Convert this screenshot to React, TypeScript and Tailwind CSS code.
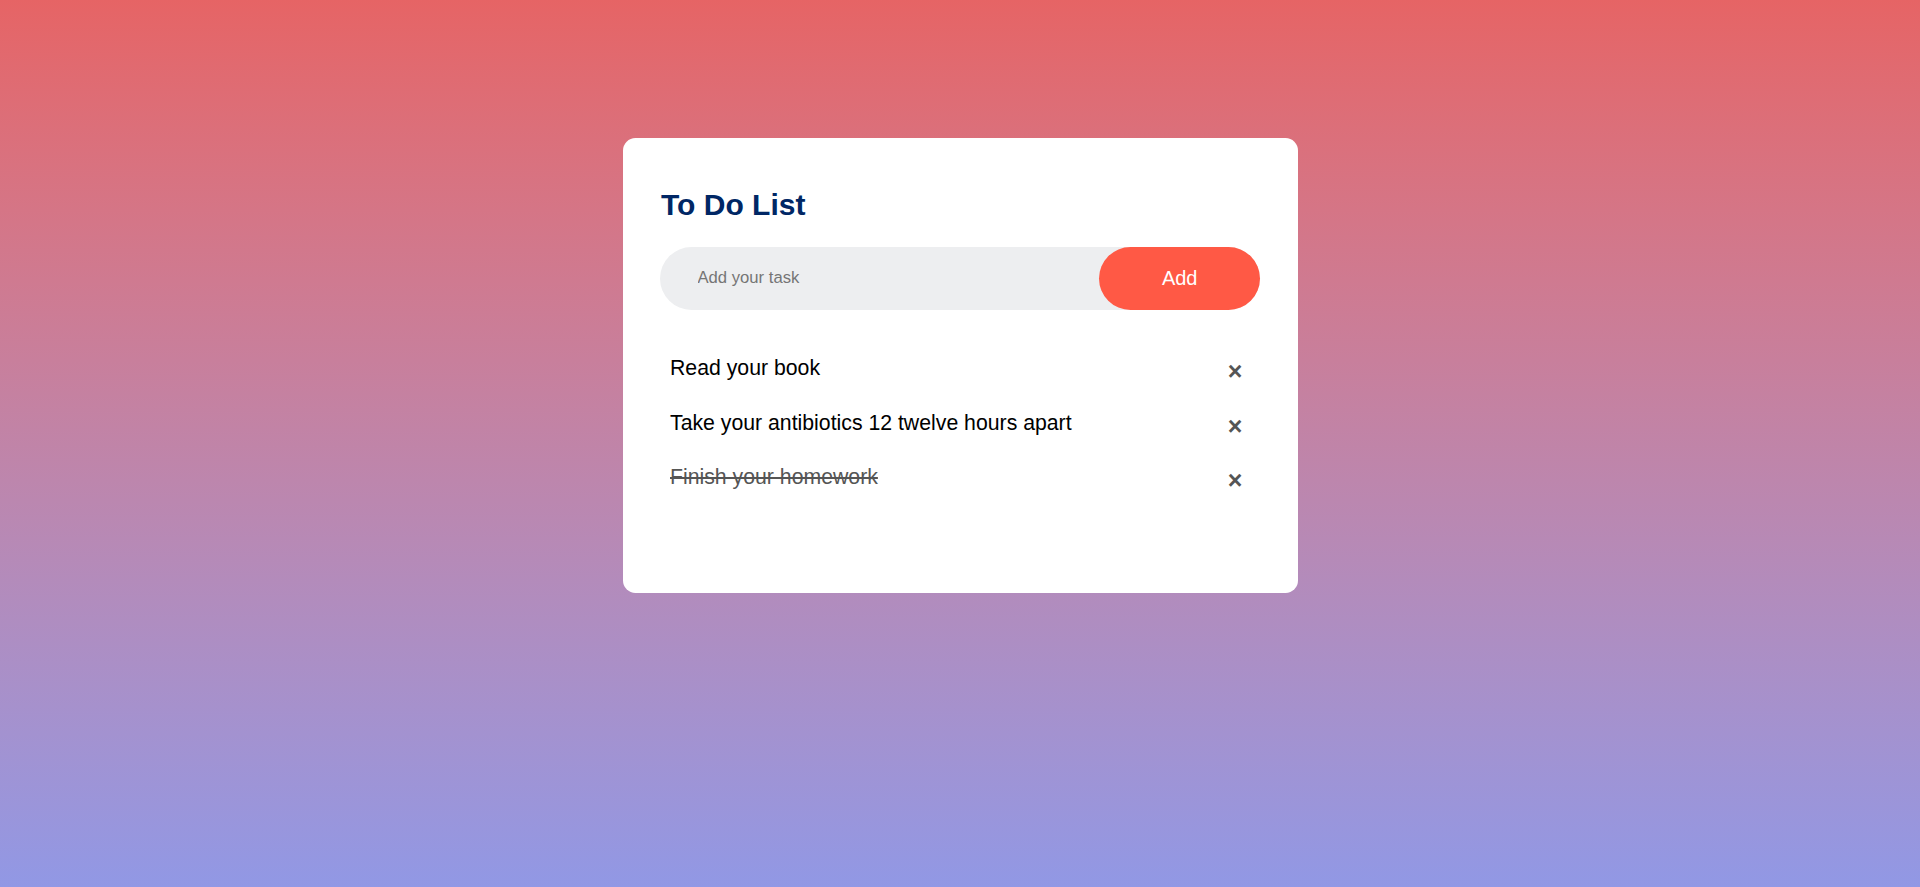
import { useState } from "react";

interface Task {
  id: number;
  text: string;
  done: boolean;
}

const initialTasks: Task[] = [
  { id: 1, text: "Read your book", done: false },
  { id: 2, text: "Take your antibiotics 12 twelve hours apart", done: false },
  { id: 3, text: "Finish your homework", done: true },
];

export default function App() {
  const [tasks, setTasks] = useState<Task[]>(initialTasks);
  const [value, setValue] = useState("");

  const addTask = () => {
    if (!value.trim()) return;
    setTasks((prev) => [...prev, { id: Date.now(), text: value, done: false }]);
    setValue("");
  };

  return (
    <div className="min-h-screen w-full p-[12.5px] bg-linear-to-b from-[#e66465] to-[#9198e5] font-['Liberation_Sans',Arial,sans-serif]">
      <div className="mx-auto mt-[125px] w-full max-w-[675px] bg-white rounded-[12.5px] pt-[50px] px-[37.5px] pb-[88.5px]">
        {/* Title */}
        <h2 className="text-[30px] leading-[34.5px] font-bold text-[#002765] mb-[25px] pl-px">
          To Do List
        </h2>

        {/* Input Row */}
        <div className="flex items-center justify-between bg-[#edeef0] rounded-[37.5px] pl-[25px] mb-[31.25px]">
          <input
            type="text"
            value={value}
            onChange={(e) => setValue(e.target.value)}
            placeholder="Add your task"
            className="flex-1 bg-transparent border-none outline-none p-[12.5px] text-[16.67px] text-black placeholder:text-[#757575]"
          />
          <button
            onClick={addTask}
            className="px-[62.5px] py-[20px] bg-[#ff5945] text-white text-[20px] leading-[23px] rounded-[50px] cursor-pointer"
          >
            Add
          </button>
        </div>

        {/* Task List */}
        <ul>
          {tasks.map((task) => (
            <li
              key={task.id}
              onClick={() =>
                setTasks((prev) =>
                  prev.map((t) => (t.id === task.id ? { ...t, done: !t.done } : t))
                )
              }
              className={`relative list-none text-[21.25px] leading-[24.4px] py-[15px] pr-[10px] pl-[10px] cursor-pointer select-none ${
                task.done ? "text-[#555] line-through" : "text-black"
              }`}
            >
              {task.text}
              <span
                onClick={(e) => {
                  e.stopPropagation();
                  setTasks((prev) => prev.filter((t) => t.id !== task.id));
                }}
                className="absolute right-0 top-[5px] w-[50px] h-[50px] text-[25px] font-bold leading-[50px] text-center text-[#555] rounded-full no-underline"
              >
                {"\u00d7"}
              </span>
            </li>
          ))}
        </ul>
      </div>
    </div>
  );
}
